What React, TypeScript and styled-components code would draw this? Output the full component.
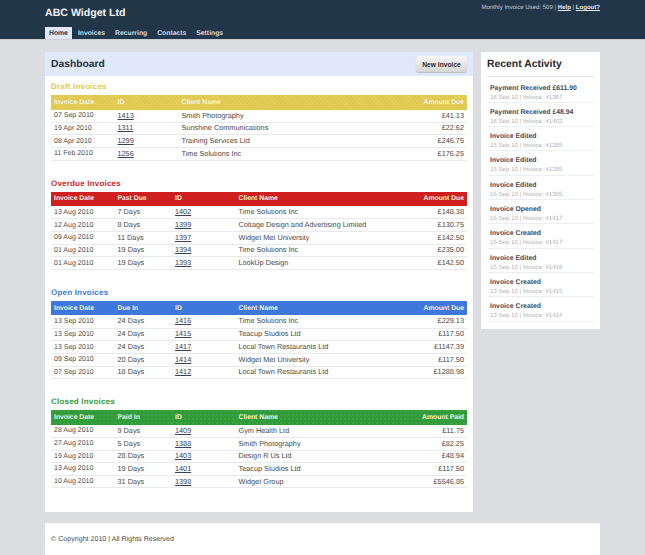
import React from 'react'
import styled, {createGlobalStyle} from 'styled-components'

const GlobalStyle = createGlobalStyle`
    html, body {
      margin: 0;
      height: 555px;
      overflow: hidden;
      background: #dcdde0;
      font-family: "Liberation Sans", Arial, sans-serif;
      color: #444;
      text-rendering: geometricPrecision;
    }
`

const Header = styled.header`
    height: 39px;
    background: #22364a;
    border-bottom: 1px solid #c9ced3;
`

const Container = styled.div`
    width: 555px;
    margin-left: 45px;
`

const HeaderInner = styled(Container)`
    display: flex;
    flex-direction: column;
    justify-content: space-between;
    height: 39px;
`

const TopRow = styled.div`
    display: flex;
    justify-content: space-between;
    align-items: flex-start;
`

const Logo = styled.div`
    font-size: 10.6px;
    font-weight: bold;
    color: #f2f4f6;
    line-height: 15px;
    margin-top: 5.5px;
`

const UserInfo = styled.div`
    font-size: 6.05px;
    color: #c4cad0;
    line-height: 8px;
    margin-top: 4px;

    a {
      color: #e8ebee;
      font-weight: bold;
      text-decoration: underline;
    }
`

const Nav = styled.nav`
    display: flex;
    gap: 2px;
`

const Tab = styled.a<{$active?: boolean}>`
    display: block;
    height: 12.5px;
    line-height: 13px;
    padding: 0 4px;
    font-size: 6.8px;
    font-weight: bold;
    color: ${p => (p.$active ? '#22364a' : '#d5dbe2')};
    background: ${p => (p.$active ? '#e0e8fc' : 'transparent')};
`

const Columns = styled(Container)`
    display: flex;
    align-items: flex-start;
    gap: 8px;
    margin-top: 12px;
`

const Main = styled.main`
    width: 428px;
    height: 460px;
    background: #fff;
`

const TitleBar = styled.div`
    display: flex;
    justify-content: space-between;
    align-items: center;
    height: 24px;
    padding: 0 6px;
    background: #e0e8fc;
`

const PageTitle = styled.h1`
    margin: 1px 0 0;
    font-size: 10.3px;
    font-weight: bold;
    color: #28303a;
`

const NewButton = styled.button`
    width: 51px;
    height: 16px;
    padding: 0;
    border: 0;
    border-radius: 3px;
    background: linear-gradient(#f8f8f8, #d6d6d4);
    box-shadow: 0 1px 1px #bbb;
    font-family: inherit;
    font-size: 6.7px;
    font-weight: bold;
    color: #2a2a2a;
`

const Sections = styled.div`
    padding: 6px 6px 0;
`

const Section = styled.section`
    margin-bottom: 18px;
`

const SectionTitle = styled.h2<{$color: string}>`
    margin: 0;
    height: 13px;
    line-height: 10px;
    font-size: 8px;
    letter-spacing: 0.2px;
    font-weight: bold;
    color: ${p => p.$color};
`

const Table = styled.table`
    width: 416px;
    border-collapse: collapse;
    table-layout: fixed;
    font-size: 7.3px;
`

const HeadCell = styled.th<{$color: string; $width?: number; $pattern?: string}>`
    box-sizing: border-box;
    height: 14.5px;
    padding: 0 3px;
    width: ${p => (p.$width ? `${p.$width}px` : 'auto')};
    background-color: ${p => p.$color};
    background-image: ${p => p.$pattern || 'none'};
    background-size: ${p => (p.$pattern && p.$pattern.startsWith('radial') ? '4px 4px' : 'auto')};
    color: #f5f1dc;
    font-size: 6.8px;
    font-weight: bold;
    text-align: left;

    &:last-child {
      text-align: right;
    }
`

const Row = styled.tr`
    height: 12.67px;
    border-bottom: 1px solid #e8e9ec;
`

const Cell = styled.td`
    box-sizing: border-box;
    padding: 0 3px;
    color: #4a4a4a;
    line-height: 10px;
    white-space: nowrap;

    &:first-child {
      padding-top: 1px;
      font-size: 7px;
    }

    &:last-child {
      text-align: right;
    }

    a {
      color: #3a4258;
      text-decoration: underline;
    }
`

const Sidebar = styled.aside`
    width: 107px;
    padding: 0 6px 7px;
    background: #fff;
`

const SideTitle = styled.h2`
    margin: 0 0 2px;
    height: 23.5px;
    line-height: 26px;
    font-size: 10.4px;
    font-weight: bold;
    color: #28282c;
    border-bottom: 1px solid #dfdfe2;
`

const Activity = styled.div`
    height: 23.33px;
    padding-left: 3px;
    border-bottom: 1px solid #eceef2;
`

const ActivityTitle = styled.div`
    padding-top: 5px;
    font-size: 6.85px;
    line-height: 10px;
    font-weight: bold;
    color: #45495a;
`

const ActivityMeta = styled.div`
    font-size: 6.1px;
    line-height: 8px;
    color: #b0b0b2;
`

const Footer = styled(Container)`
    margin-top: 11px;
    height: 40px;
    padding: 11px 6px 0;
    box-sizing: border-box;
    background: #fff;
    font-size: 7.1px;
    line-height: 11px;
    color: #4a4a4a;
`

const dots = 'radial-gradient(circle at 1px 1px, rgba(255,255,255,0.14) 0.6px, transparent 0.8px)'
const hatch = 'repeating-linear-gradient(45deg, rgba(255,255,255,0.1) 0 1px, transparent 1px 3px)'

type Sheet = {
    title: string
    color: string
    pattern?: string
    heads: string[]
    widths: number[]
    idCol: number
    rows: string[][]
}

const sheets: Sheet[] = [
    {
        title: 'Draft Invoices',
        color: '#e0c94e',
        pattern: hatch,
        heads: ['Invoice Date', 'ID', 'Client Name', 'Amount Due'],
        widths: [63.5, 64, 208, 80.5],
        idCol: 1,
        rows: [
            ['07 Sep 2010', '1413', 'Smith Photography', '£41.13'],
            ['19 Apr 2010', '1311', 'Sunshine Communications', '£22.62'],
            ['08 Apr 2010', '1299', 'Training Services Ltd', '£246.75'],
            ['11 Feb 2010', '1256', 'Time Solutions Inc', '£176.25'],
        ],
    },
    {
        title: 'Overdue Invoices',
        color: '#cf1f1f',
        heads: ['Invoice Date', 'Past Due', 'ID', 'Client Name', 'Amount Due'],
        widths: [63.5, 57.5, 63.5, 171.5, 60],
        idCol: 2,
        rows: [
            ['13 Aug 2010', '7 Days', '1402', 'Time Solutions Inc', '£148.38'],
            ['12 Aug 2010', '8 Days', '1399', 'Cottage Design and Advertising Limited', '£130.75'],
            ['09 Aug 2010', '11 Days', '1397', 'Widget Met University', '£142.50'],
            ['01 Aug 2010', '19 Days', '1394', 'Time Solutions Inc', '£235.00'],
            ['01 Aug 2010', '19 Days', '1393', 'LookUp Design', '£142.50'],
        ],
    },
    {
        title: 'Open Invoices',
        color: '#3e78dc',
        heads: ['Invoice Date', 'Due In', 'ID', 'Client Name', 'Amount Due'],
        widths: [63.5, 57.5, 63.5, 171.5, 60],
        idCol: 2,
        rows: [
            ['13 Sep 2010', '24 Days', '1416', 'Time Solutions Inc', '£229.13'],
            ['13 Sep 2010', '24 Days', '1415', 'Teacup Studios Ltd', '£117.50'],
            ['13 Sep 2010', '24 Days', '1417', 'Local Town Restaurants Ltd', '£1147.39'],
            ['09 Sep 2010', '20 Days', '1414', 'Widget Met University', '£117.50'],
            ['07 Sep 2010', '18 Days', '1412', 'Local Town Restaurants Ltd', '£1288.98'],
        ],
    },
    {
        title: 'Closed Invoices',
        color: '#2f9c37',
        pattern: dots,
        heads: ['Invoice Date', 'Paid In', 'ID', 'Client Name', 'Amount Paid'],
        widths: [63.5, 57.5, 63.5, 171.5, 60],
        idCol: 2,
        rows: [
            ['28 Aug 2010', '9 Days', '1409', 'Gym Health Ltd', '£11.75'],
            ['27 Aug 2010', '5 Days', '1388', 'Smith Photography', '£82.25'],
            ['19 Aug 2010', '28 Days', '1403', 'Design R Us Ltd', '£48.94'],
            ['13 Aug 2010', '19 Days', '1401', 'Teacup Studios Ltd', '£117.50'],
            ['10 Aug 2010', '31 Days', '1398', 'Widget Group', '£5546.85'],
        ],
    },
]

const activity = [
    ['Payment Received £611.90', '16 Sep 10 | Invoice: #1367'],
    ['Payment Received £48.94', '16 Sep 10 | Invoice: #1403'],
    ['Invoice Edited', '15 Sep 10 | Invoice: #1395'],
    ['Invoice Edited', '15 Sep 10 | Invoice: #1395'],
    ['Invoice Edited', '15 Sep 10 | Invoice: #1395'],
    ['Invoice Opened', '15 Sep 10 | Invoice: #1417'],
    ['Invoice Created', '15 Sep 10 | Invoice: #1417'],
    ['Invoice Edited', '15 Sep 10 | Invoice: #1416'],
    ['Invoice Created', '13 Sep 10 | Invoice: #1415'],
    ['Invoice Created', '13 Sep 10 | Invoice: #1414'],
]

const tabs = ['Home', 'Invoices', 'Recurring', 'Contacts', 'Settings']

const InvoiceTable: React.FC<{sheet: Sheet}> = ({sheet}) => (
    <Section>
        <SectionTitle $color={sheet.color}>{sheet.title}</SectionTitle>
        <Table>
            <thead>
                <tr>
                    {sheet.heads.map((head, i) => (
                        <HeadCell key={head} $color={sheet.color} $pattern={sheet.pattern} $width={sheet.widths[i]}>
                            {head}
                        </HeadCell>
                    ))}
                </tr>
            </thead>
            <tbody>
                {sheet.rows.map(row => (
                    <Row key={row[sheet.idCol]}>
                        {row.map((value, i) => (
                            <Cell key={i}>{i === sheet.idCol ? <a href='#'>{value}</a> : value}</Cell>
                        ))}
                    </Row>
                ))}
            </tbody>
        </Table>
    </Section>
)

const App: React.FC = () => (
    <>
        <GlobalStyle/>
        <Header>
            <HeaderInner>
                <TopRow>
                    <Logo>ABC Widget Ltd</Logo>
                    <UserInfo>Monthly Invoice Used: 509 | <a href='#'>Help</a> | <a href='#'>Logout?</a></UserInfo>
                </TopRow>
                <Nav>
                    {tabs.map((tab, i) => <Tab key={tab} $active={i === 0}>{tab}</Tab>)}
                </Nav>
            </HeaderInner>
        </Header>
        <Columns>
            <Main>
                <TitleBar>
                    <PageTitle>Dashboard</PageTitle>
                    <NewButton>New Invoice</NewButton>
                </TitleBar>
                <Sections>
                    {sheets.map(sheet => <InvoiceTable key={sheet.title} sheet={sheet}/>)}
                </Sections>
            </Main>
            <Sidebar>
                <SideTitle>Recent Activity</SideTitle>
                {activity.map(([title, meta], i) => (
                    <Activity key={i}>
                        <ActivityTitle>{title}</ActivityTitle>
                        <ActivityMeta>{meta}</ActivityMeta>
                    </Activity>
                ))}
            </Sidebar>
        </Columns>
        <Footer>© Copyright 2010 | All Rights Reserved</Footer>
    </>
)

export default App
